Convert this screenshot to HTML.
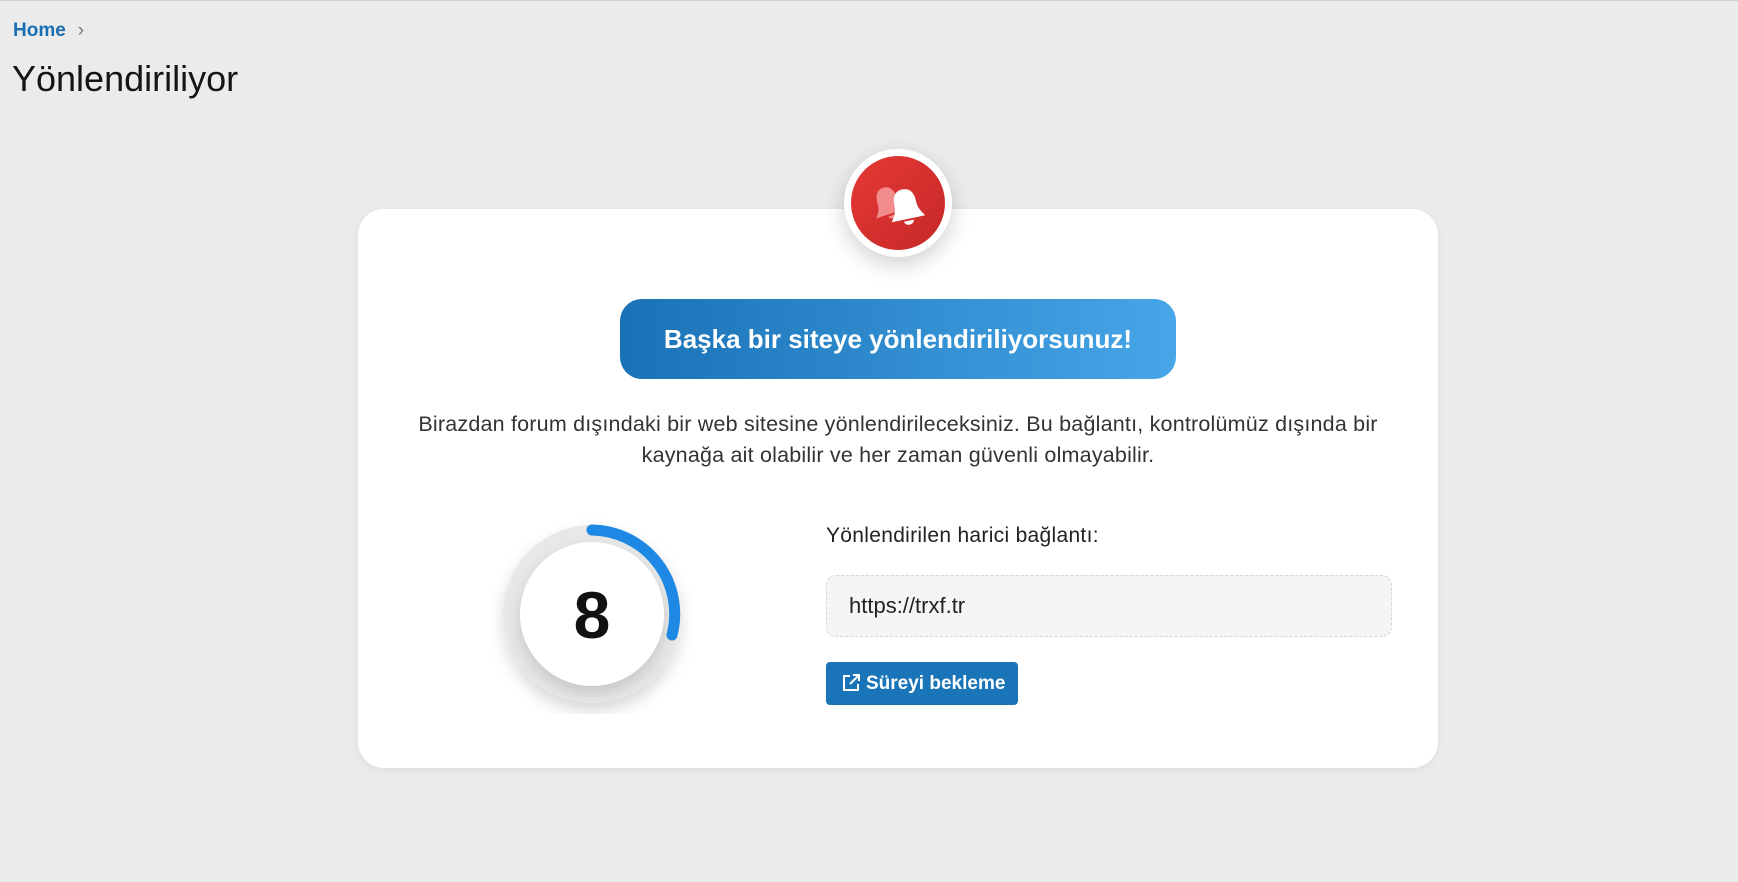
<!DOCTYPE html>
<html><head><meta charset="utf-8"><style>
*{margin:0;padding:0;box-sizing:border-box}
body{width:1738px;height:882px;background:#ebebeb;font-family:"Liberation Sans",sans-serif;position:relative;overflow:hidden;border-top:1px solid #d0d0d0}
.abs{position:absolute}
.home{left:13px;top:19px;font-size:19px;font-weight:bold;color:#1a6fb3}
.home span{color:#777;font-weight:normal;margin-left:12px}
h1{position:absolute;left:12px;top:57px;font-size:36px;font-weight:normal;color:#141414}
.card{left:358px;top:208px;width:1080px;height:559px;background:#fff;border-radius:26px;box-shadow:0 2px 8px rgba(0,0,0,.06)}
.bellwrap{left:844px;top:148px;width:108px;height:108px;border-radius:50%;background:#fff;box-shadow:0 8px 22px rgba(0,0,0,.18)}
.bell{left:851px;top:155px;width:94px;height:94px;border-radius:50%;background:linear-gradient(135deg,#e53935,#c62828)}
.banner{left:620px;top:298px;width:556px;height:80px;border-radius:22px;background:linear-gradient(90deg,#1a72b6,#46a6e7);color:#fff;font-weight:bold;font-size:26px;text-align:center;line-height:80px}
.para{left:370px;top:408px;width:1056px;text-align:center;font-size:21.5px;letter-spacing:.2px;line-height:31px;color:#333}
.lbl{left:826px;top:523px;font-size:21px;letter-spacing:.3px;color:#222}
.inp{left:826px;top:574px;width:566px;height:62px;border:1px dashed #d6d6d6;border-radius:10px;background:#f5f5f5;font-size:22px;color:#222;padding-left:22px;line-height:60px}
.btn{left:826px;top:661px;width:192px;height:43px;border-radius:4px;background:#1a74b8;color:#fff;font-weight:bold;font-size:19px;line-height:43px;padding-left:40px}
</style></head><body>
<div class="abs home">Home<span>›</span></div>
<h1>Yönlendiriliyor</h1>
<div class="abs card"></div>
<div class="abs bellwrap"></div>
<div class="abs bell"></div>
<svg class="abs" style="left:866px;top:180px" width="64" height="50" viewBox="0 0 64 50">
<g transform="rotate(-18 22 22)">
<path d="M22 6c-7 0-10 6-10 13 0 7-3 10-6 14h32c-3-4-6-7-6-14 0-7-3-13-10-13z" fill="#f28b8b"/>
<path d="M18 35a4 3 0 0 0 8 0z" fill="#f28b8b"/>
</g>
<g transform="rotate(-12 40 26)">
<path d="M40 8c-8 0-11 6-11 14 0 8-3 11-6 16h34c-3-5-6-8-6-16 0-8-3-14-11-14z" fill="#fff"/>
<path d="M35 40a5 4 0 0 0 10 0z" fill="#fff"/>
</g>
</svg>
<div class="abs banner">Başka bir siteye yönlendiriliyorsunuz!</div>
<div class="abs para">Birazdan forum dışındaki bir web sitesine yönlendirileceksiniz. Bu bağlantı, kontrolümüz dışında bir<br>kaynağa ait olabilir ve her zaman güvenli olmayabilir.</div>
<svg class="abs" style="left:492px;top:513px" width="200" height="200" viewBox="0 0 200 200">
<defs><filter id="s" x="-30%" y="-30%" width="160%" height="160%"><feDropShadow dx="0" dy="8" stdDeviation="8" flood-opacity=".15"/></filter></defs>
<circle cx="100" cy="100" r="89" fill="#e8e8e8" filter="url(#s)"/>
<circle cx="100" cy="100" r="72" fill="#fff" filter="url(#s)"/>
<path d="M100 16 A84 84 0 0 1 180 121" fill="none" stroke="#1e88e5" stroke-width="11" stroke-linecap="round"/>
<text x="100" y="124" text-anchor="middle" font-family="Liberation Sans" font-weight="bold" font-size="66" fill="#111">8</text>
</svg>
<div class="abs lbl">Yönlendirilen harici bağlantı:</div>
<div class="abs inp">https://trxf.tr</div>
<div class="abs btn">Süreyi bekleme</div>
<svg class="abs" style="left:841px;top:672px" width="20" height="20" viewBox="0 0 20 20" fill="none" stroke="#fff" stroke-width="2">
<path d="M9 3H3v14h14v-6"/><path d="M12 2h6v6"/><path d="M18 2L9 11"/>
</svg>
</body></html>
